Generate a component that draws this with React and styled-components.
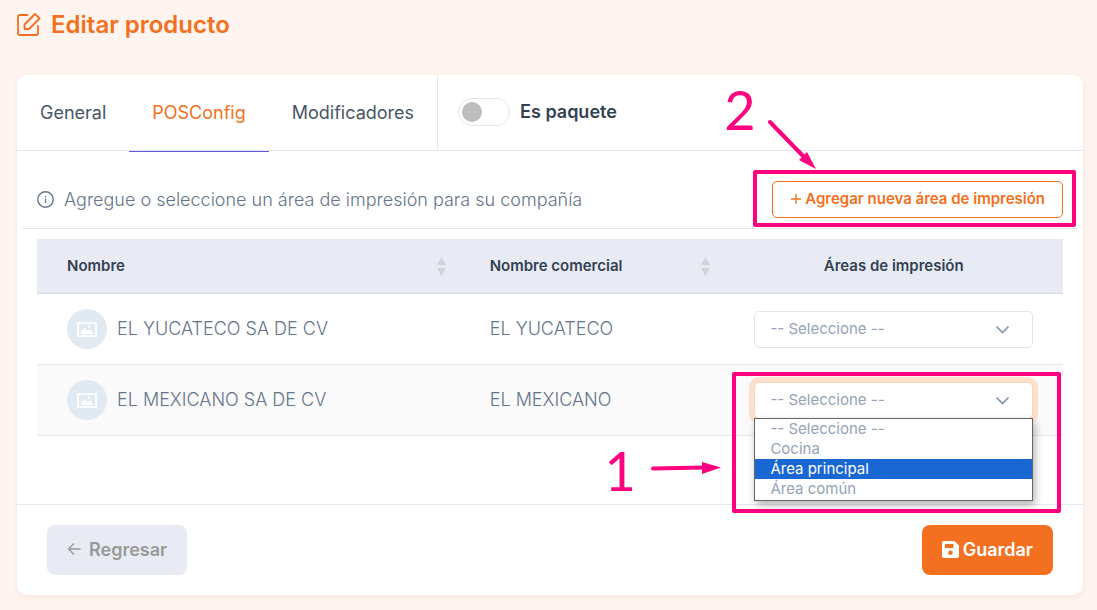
import { useState } from "react";
import styled, { createGlobalStyle } from "styled-components";

const GlobalStyles = createGlobalStyle`
  * {
    box-sizing: border-box;
  }

  body {
    margin: 0;
    min-height: 100vh;
    background-color: #fff4ef;
    color: #64748b;
    font-family: "Inter", "Liberation Sans", sans-serif;
    font-size: 18px;
    font-weight: 300;
    line-height: 24px;
  }
`;

const Page = styled.main`
  padding: 8px 14px 15px 17px;
`;

const Title = styled.h1`
  display: flex;
  align-items: center;
  gap: 10px;
  margin: 0 0 33px;
  color: #f37021;
  font-size: 24px;
  font-weight: 600;
  line-height: 34px;
`;

const Card = styled.section`
  background-color: #ffffff;
  border-radius: 10px;
  box-shadow: 0 2px 6px rgba(120, 50, 20, 0.08);
`;

const CardHeader = styled.header`
  display: flex;
  height: 76px;
  border-bottom: 1px solid #e2e8f0;
`;

const Tabs = styled.nav`
  display: flex;
  border-right: 1px solid #e2e8f0;
`;

const Tab = styled.a`
  display: flex;
  align-items: center;
  height: 77px;
  padding: 0 23px;
  border-bottom: 1px solid ${({ $active }) => ($active ? "#6658dd" : "transparent")};
  color: ${({ $active }) => ($active ? "#f37021" : "#475569")};
  font-weight: 400;
  text-decoration: none;
`;

const PackageSwitch = styled.label`
  display: flex;
  align-items: center;
  gap: 10px;
  padding: 0 20px 2px;
  color: #334155;
  font-weight: 600;
`;

const SwitchInput = styled.input`
  appearance: none;
  display: flex;
  align-items: center;
  width: 52px;
  height: 28px;
  margin: 0;
  padding: 0 3px;
  border: 1px solid #e2e8f0;
  border-radius: 14px;
  background-color: #ffffff;
  cursor: pointer;

  &::before {
    content: "";
    width: 20px;
    height: 20px;
    border-radius: 50%;
    background-color: #bdbdbd;
  }

  &:checked {
    justify-content: flex-end;
  }

  &:checked::before {
    background-color: #f37021;
  }
`;

const Toolbar = styled.div`
  display: flex;
  align-items: center;
  justify-content: space-between;
  margin: 0 5px 10px;
  padding: 30px 15px 10px;
  border-bottom: 1px solid #e2e8f0;
`;

const Hint = styled.p`
  display: flex;
  align-items: center;
  gap: 10px;
  margin: 0;
`;

const AddButton = styled.button`
  display: flex;
  align-items: center;
  gap: 3px;
  height: 37px;
  padding: 0 17px 2px;
  border: 1px solid #f37021;
  border-radius: 5px;
  background-color: #ffffff;
  color: #f37021;
  font-family: inherit;
  font-size: 15px;
  font-weight: 600;
  cursor: pointer;
`;

const TableWrapper = styled.div`
  padding: 0 20px 68px;
`;

const Table = styled.table`
  width: 100%;
  table-layout: fixed;
  border-collapse: separate;
  border-spacing: 0;
`;

const HeadCell = styled.th`
  width: ${({ $width }) => $width};
  height: 55px;
  padding: 0 14px 0 30px;
  border-bottom: 1px solid #d5dae5;
  background-color: #e8ebf3;
  color: #334155;
  font-size: 15px;
  font-weight: 600;
  text-align: left;
`;

const HeadCellCentered = styled(HeadCell)`
  padding: 0 30px;
  text-align: center;
`;

const HeadContent = styled.div`
  display: flex;
  align-items: center;
  justify-content: space-between;
`;

const Row = styled.tr`
  &:nth-child(even) {
    background-color: #fafafa;
  }
`;

const Cell = styled.td`
  height: 71px;
  padding: 0 30px;
  border-bottom: 1px solid #e2e8f0;
`;

const Company = styled.div`
  display: flex;
  align-items: center;
  gap: 10px;
`;

const Avatar = styled.span`
  display: flex;
  align-items: center;
  justify-content: center;
  width: 40px;
  height: 40px;
  border-radius: 50%;
  background-color: #e1eaf1;
`;

const SelectWrapper = styled.div`
  position: relative;
`;

const Select = styled.select`
  appearance: none;
  display: block;
  width: 100%;
  height: 37px;
  padding: 0 15px 2px;
  border: 1px solid ${({ $open }) => ($open ? "#fbd5bb" : "#e2e5ea")};
  border-radius: 5px;
  outline: none;
  background-color: #ffffff;
  box-shadow: ${({ $open }) => ($open ? "0 0 0 5px #fce0cd" : "none")};
  color: #94a3b8;
  font-family: inherit;
  font-size: 15px;
  font-weight: 400;
`;

const Chevron = styled.svg`
  position: absolute;
  top: 14px;
  right: 23px;
  pointer-events: none;
`;

const Options = styled.ul`
  position: absolute;
  z-index: 1;
  top: 36px;
  left: 0;
  right: 0;
  margin: 0;
  padding: 0 0 1px;
  border: 1px solid #666666;
  background-color: #ffffff;
  box-shadow: 2px 4px 8px rgba(0, 0, 0, 0.3);
  list-style: none;
`;

const Option = styled.li`
  padding: 0 15px;
  background-color: ${({ $selected }) => ($selected ? "#1967d2" : "#ffffff")};
  color: ${({ $selected }) => ($selected ? "#ffffff" : "#94a3b8")};
  font-size: 15px;
  font-weight: 400;
  line-height: 20px;
  cursor: default;
`;

const CardFooter = styled.footer`
  display: flex;
  justify-content: space-between;
  padding: 20px 30px;
  border-top: 1px solid #e2e8f0;
`;

const FooterButton = styled.button`
  display: flex;
  align-items: center;
  gap: ${({ $primary }) => ($primary ? "4px" : "8px")};
  height: 50px;
  padding: 0 20px 2px;
  border: none;
  border-radius: 8px;
  background-color: ${({ $primary }) => ($primary ? "#f37021" : "#e8ebf3")};
  color: ${({ $primary }) => ($primary ? "#ffffff" : "#999999")};
  font-family: inherit;
  font-size: 18px;
  font-weight: 600;
  cursor: pointer;
`;

const Highlighted = styled.div`
  position: relative;
`;

const Marker = styled.div`
  position: absolute;
  z-index: 2;
  top: ${({ $top }) => $top}px;
  right: ${({ $right }) => $right}px;
  bottom: ${({ $bottom }) => $bottom}px;
  left: ${({ $left }) => $left}px;
  border: 4px solid #ff0080;
  border-radius: 2px;
  pointer-events: none;
`;

const StepNumber = styled.span`
  position: absolute;
  top: ${({ $top }) => $top}px;
  left: ${({ $left }) => $left}px;
  color: #ff0080;
  font-family: "Lato", sans-serif;
  font-size: 54px;
  font-weight: 400;
  line-height: 54px;
`;

const StepArrow = styled.svg`
  position: absolute;
  top: ${({ $top }) => $top}px;
  left: ${({ $left }) => $left}px;
`;

const companies = [
  { id: 1, name: "EL YUCATECO SA DE CV", tradeName: "EL YUCATECO" },
  { id: 2, name: "EL MEXICANO SA DE CV", tradeName: "EL MEXICANO", open: true },
];

const areas = ["-- Seleccione --", "Cocina", "Área principal", "Área común"];

function EditIcon() {
  return (
    <svg width="24" height="24" viewBox="0 0 24 24" fill="none" stroke="currentColor" strokeWidth="1.8" strokeLinejoin="round" aria-hidden="true">
      <path d="M10.500 2H2.500A1.500 1.500 0 0 0 1 3.500v17A1.500 1.500 0 0 0 2.500 22h17a1.500 1.500 0 0 0 1.500-1.500V13" strokeLinecap="round" />
      <path d="M7.500 11.500 18 1l4.500 4.500L12 16H7.500z" />
    </svg>
  );
}

function InfoIcon() {
  return (
    <svg width="17" height="17" viewBox="0 0 17 17" fill="none" stroke="currentColor" aria-hidden="true">
      <circle cx="8.5" cy="8.5" r="7.7" strokeWidth="1.4" />
      <path d="M8.5 7.5V12M8.5 5V6.3" strokeWidth="1.2" />
    </svg>
  );
}

function PlusIcon() {
  return (
    <svg width="12" height="12" viewBox="0 0 12 12" stroke="currentColor" strokeWidth="1.3" aria-hidden="true">
      <path d="M6 1v10M1 6h10" />
    </svg>
  );
}

function SortIcon() {
  return (
    <svg width="9" height="19" viewBox="0 0 9 19" fill="#d0d4dc" aria-hidden="true">
      <path d="M4.500 0 9 8H0zM0 11h9l-4.500 8z" />
    </svg>
  );
}

function PictureIcon() {
  return (
    <svg width="20" height="15" viewBox="0 0 20 15" aria-hidden="true">
      <rect x="1" y="1" width="18" height="13" fill="none" stroke="#ffffff" strokeWidth="1.800" />
      <path d="M4 12V9.500L7.500 6l3 3 2-1.500L16 10.500V12z" fill="#ffffff" />
      <circle cx="12" cy="4.500" r="1.300" fill="#ffffff" />
    </svg>
  );
}

function BackIcon() {
  return (
    <svg width="14" height="14" viewBox="0 0 14 14" fill="none" stroke="currentColor" strokeWidth="1.3" aria-hidden="true">
      <path d="M13.500 7H2M7 1.500 1.500 7 7 12.500" />
    </svg>
  );
}

function SaveIcon() {
  return (
    <svg width="17" height="17" viewBox="0 0 17 17" fill="currentColor" fillRule="evenodd" aria-hidden="true">
      <path d="M2 0h10.500L17 4.500V15a2 2 0 0 1-2 2H2a2 2 0 0 1-2-2V2a2 2 0 0 1 2-2zM3 3v4h8.500V3zM8.500 9.500a2.200 2.200 0 1 0 0 4.400 2.200 2.200 0 1 0 0-4.400z" />
    </svg>
  );
}

function AreaSelect({ label, open }) {
  const [area, setArea] = useState(areas[0]);

  return (
    <SelectWrapper>
      <Select
        aria-label={label}
        value={area}
        onChange={(e) => setArea(e.target.value)}
        $open={open}
      >
        {areas.map((item) => (
          <option key={item}>{item}</option>
        ))}
      </Select>
      <Chevron width="15" height="10" viewBox="0 0 15 10" fill="none" stroke="#8495ad" strokeWidth="1.700">
        <path d="m1.500 1.500 6 6 6-6" />
      </Chevron>
      {open && (
        <>
          <Options role="listbox" aria-label={label}>
            {areas.map((item) => (
              <Option
                key={item}
                role="option"
                aria-selected={item === "Área principal"}
                $selected={item === "Área principal"}
                onClick={() => setArea(item)}
              >
                {item}
              </Option>
            ))}
          </Options>
          <Marker $top={-10} $right={-28} $bottom={-94} $left={-22} />
          <StepNumber $top={62} $left={-150}>1</StepNumber>
          <StepArrow $top={79} $left={-104} width="72" height="14" viewBox="0 0 72 14">
            <path d="M3 7.500 54 6.500" stroke="#ff0080" strokeWidth="4" strokeLinecap="round" />
            <path d="M52 1 71 6.500 52 13z" fill="#ff0080" />
          </StepArrow>
        </>
      )}
    </SelectWrapper>
  );
}

export default function App() {
  const [isPackage, setIsPackage] = useState(false);

  return (
    <Page>
      <GlobalStyles />
      <Title>
        <EditIcon />
        Editar producto
      </Title>
      <Card>
        <CardHeader>
          <Tabs>
            <Tab href="#general">General</Tab>
            <Tab href="#posconfig" $active>
              POSConfig
            </Tab>
            <Tab href="#modificadores">Modificadores</Tab>
          </Tabs>
          <PackageSwitch>
            <SwitchInput
              type="checkbox"
              role="switch"
              checked={isPackage}
              onChange={(e) => setIsPackage(e.target.checked)}
            />
            Es paquete
          </PackageSwitch>
        </CardHeader>
        <Toolbar>
          <Hint>
            <InfoIcon />
            Agregue o seleccione un área de impresión para su compañía
          </Hint>
          <Highlighted>
            <AddButton type="button">
              <PlusIcon />
              Agregar nueva área de impresión
            </AddButton>
            <Marker $top={-11} $right={-13} $bottom={-9} $left={-19} />
            <StepNumber $top={-98} $left={-48}>2</StepNumber>
            <StepArrow $top={-64} $left={-6} width="52" height="54" viewBox="0 0 52 54">
              <path d="M4 5 38 40" stroke="#ff0080" strokeWidth="4" strokeLinecap="round" />
              <path d="M33 43 41 35 50 52z" fill="#ff0080" />
            </StepArrow>
          </Highlighted>
        </Toolbar>
        <TableWrapper>
          <Table>
            <thead>
              <tr>
                <HeadCell $width="41.2%">
                  <HeadContent>
                    Nombre
                    <SortIcon />
                  </HeadContent>
                </HeadCell>
                <HeadCell $width="25.8%">
                  <HeadContent>
                    Nombre comercial
                    <SortIcon />
                  </HeadContent>
                </HeadCell>
                <HeadCellCentered $width="33%">Áreas de impresión</HeadCellCentered>
              </tr>
            </thead>
            <tbody>
              {companies.map((company) => (
                <Row key={company.id}>
                  <Cell>
                    <Company>
                      <Avatar>
                        <PictureIcon />
                      </Avatar>
                      {company.name}
                    </Company>
                  </Cell>
                  <Cell>{company.tradeName}</Cell>
                  <Cell>
                    <AreaSelect
                      label={`Área de impresión de ${company.name}`}
                      open={company.open}
                    />
                  </Cell>
                </Row>
              ))}
            </tbody>
          </Table>
        </TableWrapper>
        <CardFooter>
          <FooterButton type="button">
            <BackIcon />
            Regresar
          </FooterButton>
          <FooterButton type="button" $primary>
            <SaveIcon />
            Guardar
          </FooterButton>
        </CardFooter>
      </Card>
    </Page>
  );
}
